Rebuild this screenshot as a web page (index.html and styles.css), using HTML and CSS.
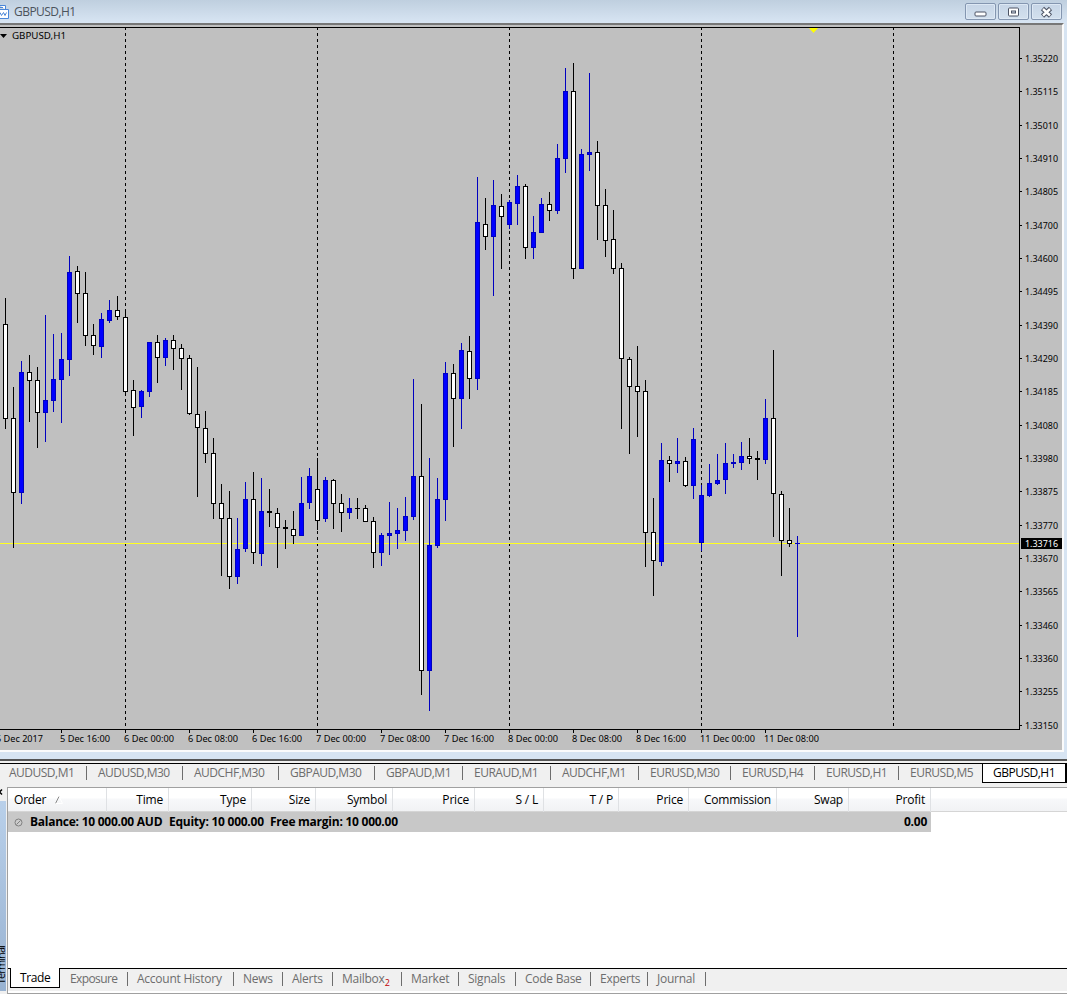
FILE: index.html
```
<!DOCTYPE html>
<html>
<head>
  <meta charset="utf-8">
  <title>GBPUSD,H1</title>
  <link rel="stylesheet" href="styles.css">
</head>
<body>

  <div class="window">
    <div class="titlebar">
      <svg class="app-icon" width="9" height="16" viewBox="0 0 9 16">
        <path d="M0 1.500h5.500v4M0 5.500h8.500v9H0" fill="#fff" stroke="#4a86d8"/>
        <path d="M0 3.500h3M0 8.500l1.500 3l2-3l1.500 3l1.500-3" fill="none" stroke="#4a86d8"/>
      </svg>
      <span class="title">GBPUSD,H1</span>
      <div class="win-buttons">
        <button><svg width="13" height="12"><rect x="1" y="6" width="11" height="4" rx="1" fill="#fff" stroke="#4c5364"/></svg></button>
        <button><svg width="13" height="12"><rect x="1.500" y="2" width="10" height="8" rx="1" fill="#fff" stroke="#4c5364"/><rect x="4.500" y="5" width="4" height="2" fill="#d0dcea" stroke="#4c5364"/></svg></button>
        <button><svg width="13" height="12"><path d="M2.500 2.500l8 7.500M10.500 2.500l-8 7.500" stroke="#4c5364" stroke-width="4.600"/><path d="M3 3l7 6.500M10 3l-7 6.500" stroke="#fff" stroke-width="2.400"/></svg></button>
      </div>
    </div>
    <div class="chart-frame">
      <svg id="chart" width="1062" height="725" viewBox="0 25 1062 725"></svg>
    </div>
  </div>

  <div class="chart-tabs">
    <div><span>AUDUSD,M1</span></div>
    <div><span>AUDUSD,M30</span></div>
    <div><span>AUDCHF,M30</span></div>
    <div><span>GBPAUD,M30</span></div>
    <div><span>GBPAUD,M1</span></div>
    <div><span>EURAUD,M1</span></div>
    <div><span>AUDCHF,M1</span></div>
    <div><span>EURUSD,M30</span></div>
    <div><span>EURUSD,H4</span></div>
    <div><span>EURUSD,H1</span></div>
    <div><span>EURUSD,M5</span></div>
    <div class="active"><span>GBPUSD,H1</span></div>
  </div>

  <div class="terminal">
    <div class="side">
      <svg class="side-close" width="7" height="14"><path d="M-3 2.500l5 5M2 2.500l-5 5" stroke="#000" stroke-width="1.500"/></svg>
      <div class="side-bar"><span>Terminal</span></div>
    </div>
    <div class="panel">
      <div class="thead">
        <div class="order">Order <svg width="8" height="8"><path d="M0.500 7.500L4 0.500" stroke="#888"/><path d="M4 0.500L7.500 7.500H0.500" stroke="#fff" fill="none"/></svg></div>
        <div>Time</div>
        <div>Type</div>
        <div>Size</div>
        <div>Symbol</div>
        <div>Price</div>
        <div>S / L</div>
        <div>T / P</div>
        <div>Price</div>
        <div>Commission</div>
        <div>Swap</div>
        <div>Profit</div>
      </div>
      <div class="rows">
        <div class="balance">
          <svg width="9" height="9"><circle cx="4.500" cy="4.500" r="3.500" fill="#ccc" stroke="#808080"/><path d="M2.500 6.500l4-4" stroke="#808080"/></svg>
          <span class="b1">Balance: 10 000.00 AUD</span>
          <span class="b2">Equity: 10 000.00</span>
          <span class="b3">Free margin: 10 000.00</span>
          <span class="profit">0.00</span>
        </div>
      </div>
      <div class="bottom-tabs">
        <div class="active">Trade</div>
        <div>Exposure</div>
        <div>Account History</div>
        <div>News</div>
        <div>Alerts</div>
        <div>Mailbox<sub>2</sub></div>
        <div>Market</div>
        <div>Signals</div>
        <div>Code Base</div>
        <div>Experts</div>
        <div>Journal</div>
      </div>
    </div>
  </div>

  <script src="chart.js"></script>
</body>
</html>
```
FILE: styles.css
```
* {
  box-sizing: border-box;
}

body {
  margin: 0;
  width: 1067px;
  height: 994px;
  overflow: hidden;
  background: #f0f0f0;
  font-family: "Open Sans", "Noto Sans", sans-serif;
  font-size: 12px;
  color: #000;
}

.window {
  height: 759px;
  background: #d7e4f2;
}

.titlebar {
  display: flex;
  align-items: center;
  height: 23px;
  background: linear-gradient(#bfcfdf, #d8e5f3);
}

.app-icon {
  width: 9px;
  margin-right: 5px;
}

.title {
  flex: 1;
  color: #4c535c;
  letter-spacing: -0.55px;
}

.win-buttons {
  display: flex;
  gap: 2px;
  margin-right: 5px;
}

.win-buttons button {
  display: flex;
  align-items: center;
  justify-content: center;
  width: 31px;
  height: 17px;
  padding: 0;
  border: 1px solid #8496b0;
  border-radius: 2px;
  background: linear-gradient(#c6d5e6, #d3e0ee);
  box-shadow: inset 0 0 0 1px #dde8f4;
}

.chart-frame {
  width: 1064px;
  height: 729px;
  border-top: 2px solid #777;
  border-right: 2px solid #fbfbfb;
  border-bottom: 2px solid #fbfbfb;
  background: #c0c0c0;
}

#chart {
  display: block;
  font-family: "Noto Sans", "Open Sans", sans-serif;
  font-size: 9.5px;
}

.chart-tabs {
  display: grid;
  grid-template-columns: 87px 96px 96px 96px 88px 88px 88px 92px 84px 84px 83px 85px;
  height: 28px;
  border-top: 2px solid #555;
  border-bottom: 4px solid #f0f0f0;
  background: linear-gradient(#f0f0f0 2px, #000 2px, #000 3px, #f0f0f0 3px, #f0f0f0 22px, #fff 22px);
  letter-spacing: -0.5px;
  color: #6d6d6d;
}

.chart-tabs div {
  height: 14px;
  margin-top: 5px;
  padding-left: 11px;
  border-right: 1px solid #6d6d6d;
  line-height: 14px;
  white-space: nowrap;
}

.chart-tabs div:first-child {
  padding-left: 9px;
}

.chart-tabs div:nth-child(11) {
  border-right: none;
}

.chart-tabs .active {
  height: 20px;
  margin-top: 2px;
  padding-left: 10px;
  border: 1px solid #000;
  border-width: 1px 2px 1px 1px;
  background: #fff;
  color: #000;
  line-height: 18px;
}

.terminal {
  display: flex;
  height: 207px;
}

.side {
  width: 7px;
  height: 204px;
}

.side-close {
  display: block;
}

.side-bar {
  display: flex;
  align-items: flex-end;
  width: 6px;
  height: 190px;
  padding-bottom: 7px;
  overflow: hidden;
  background: linear-gradient(#b9d0ea, #98b2d1);
}

.side-bar span {
  writing-mode: vertical-rl;
  transform: rotate(180deg);
  flex: none;
  margin-left: -7px;
  font-size: 11px;
  line-height: 16px;
  letter-spacing: -0.9px;
}

.panel {
  display: flex;
  flex-direction: column;
  flex: 1;
  border-left: 1px solid #a0a0a0;
  border-top: 1px solid #a0a0a0;
  border-bottom: 1px solid #a0a0a0;
}

.thead {
  display: grid;
  grid-template-columns: 99px 62px 83px 64px 77px 82px 69px 75px 70px 88px 72px 82px;
  height: 24px;
  border-bottom: 1px solid #d5d5d5;
  background: linear-gradient(#fff 10px, #f7f8fa 11px, #f1f2f4);
  letter-spacing: -0.2px;
}

.thead div {
  padding-right: 5px;
  border-right: 1px solid #dfe1e4;
  line-height: 24px;
  text-align: right;
  white-space: nowrap;
}

.thead .order {
  padding-left: 6px;
  text-align: left;
}

.order svg {
  margin-left: 6px;
}

.rows {
  flex: 1;
  background: #fff;
}

.balance {
  display: flex;
  align-items: center;
  width: 923px;
  height: 20px;
  padding: 0 4px 0 6px;
  background: #c8c8c8;
  font-weight: bold;
  line-height: 20px;
  letter-spacing: -0.25px;
  white-space: nowrap;
}

.balance svg {
  margin-right: 7px;
}

.balance span {
  height: 20px;
}

.b1 {
  width: 139px;
}

.b2 {
  width: 101px;
}

.profit {
  margin-left: auto;
}

.bottom-tabs {
  display: grid;
  grid-template-columns: 52px 68px 106px 49px 50px 69px 57px 57px 75px 57px 58px;
  height: 25px;
  border-top: 1px solid #000;
  border-bottom: 2px solid #fff;
  color: #6d6d6d;
  letter-spacing: -0.25px;
}

.bottom-tabs div {
  height: 14px;
  margin-top: 3px;
  padding-left: 9px;
  border-right: 1px solid #6d6d6d;
  line-height: 13px;
  white-space: nowrap;
}

.bottom-tabs div:nth-child(2) {
  padding-left: 10px;
  letter-spacing: -0.6px;
}

.bottom-tabs .active {
  height: 20px;
  margin: -1px 0 0 2px;
  border: 1px solid #000;
  border-width: 0 1px 1px 1px;
  background: #fff;
  color: #000;
  line-height: 20px;
  letter-spacing: -0.4px;
}

.bottom-tabs sub {
  color: #c00000;
  font-size: 9px;
  line-height: 0;
}
```
FILE: chart.js
```
// high, low, body top, body bottom, 1 = up candle
const candles = [
  [298,429,324,419,0],[387,548,418,493,0],[361,504,372,493,1],[355,422,372,381,0],[367,448,380,413,0],
  [315,442,400,413,1],[334,412,379,401,1],[333,423,359,380,1],[256,376,272,360,1],[266,323,271,294,0],
  [272,346,293,336,0],[324,355,335,346,0],[313,358,319,347,1],[300,323,310,321,1],[296,320,310,317,0],
  [309,394,317,392,0],[380,436,390,408,0],[390,418,391,407,1],[342,397,342,392,1],[335,383,342,358,0],
  [338,366,340,358,1],[335,370,340,349,0],[344,390,348,359,0],[355,415,358,414,0],[367,497,414,428,0],
  [411,463,428,454,0],[438,519,453,504,0],[484,576,503,519,0],[491,589,518,577,0],[518,584,549,577,1],
  [482,552,499,549,1],[472,564,499,553,0],[478,566,511,554,1],[489,527,511,513,0],[508,568,513,528,0],
  [520,549,527,529,0],[511,544,529,536,0],[477,536,503,536,1],[468,509,476,503,1],[458,530,489,521,0],
  [477,522,480,519,1],[479,529,480,504,0],[494,532,503,513,0],[498,519,508,513,1],[498,519,508,509,0],
  [505,522,508,522,0],[517,568,521,553,0],[533,566,535,553,1],[502,555,533,536,1],[508,549,530,534,1],
  [497,541,516,531,1],[379,520,476,517,1],[404,695,476,671,0],[458,711,545,671,1],[478,548,499,546,1],
  [362,521,373,500,1],[364,447,373,399,0],[343,429,350,399,1],[336,399,351,379,0],[177,390,222,379,1],
  [198,250,224,237,0],[180,296,205,237,1],[194,269,206,217,0],[200,229,202,225,1],[175,225,186,204,1],
  [184,259,186,248,0],[216,259,232,248,1],[198,233,204,233,1],[192,221,204,211,0],[144,214,158,211,1],
  [68,173,91,159,1],[63,279,91,269,0],[149,269,154,269,1],[73,171,152,155,1],[141,240,152,206,0],
  [189,257,205,241,0],[210,274,239,269,0],[263,429,268,359,0],[357,454,359,387,0],[346,437,386,392,0],
  [380,567,391,533,0],[498,596,532,561,0],[443,566,460,562,1],[456,482,460,464,0],[438,473,461,464,1],
  [457,487,461,486,0],[428,499,439,486,1],[485,551,495,543,1],[464,497,483,496,1],[454,485,480,484,1],
  [443,494,463,480,1],[454,468,462,464,1],[442,470,456,463,1],[438,464,456,459,0],[451,480,458,460,0],
  [399,464,418,460,1],[350,537,418,494,0],[491,576,494,541,0],[508,547,540,544,0],[536,637,543,544,1]
];

const prices = ['1.35220', '1.35115', '1.35010', '1.34910', '1.34805', '1.34700', '1.34600',
  '1.34495', '1.34390', '1.34290', '1.34185', '1.34080', '1.33980', '1.33875', '1.33770',
  '1.33670', '1.33565', '1.33460', '1.33360', '1.33255', '1.33150'];

const times = ['5 Dec 16:00', '6 Dec 00:00', '6 Dec 08:00', '6 Dec 16:00', '7 Dec 00:00', '7 Dec 08:00',
  '7 Dec 16:00', '8 Dec 00:00', '8 Dec 08:00', '8 Dec 16:00', '11 Dec 00:00', '11 Dec 08:00'];

let out = '';

function rect(x, y, w, h, fill) {
  out += `<rect x="${x}" y="${y}" width="${w}" height="${h}" fill="${fill}"/>`;
}

function text(x, y, str, width, fill = '#000') {
  out += `<text x="${x}" y="${y}" textLength="${width}" lengthAdjust="spacingAndGlyphs" fill="${fill}">${str}</text>`;
}

// day separators
for (let x = 125; x < 1000; x += 192) {
  out += `<path d="M${x + 0.5} 27V729" stroke="#000" stroke-dasharray="3 3"/>`;
}

// current price
rect(0, 543, 1019, 1, '#ffff20');

candles.forEach(([high, low, top, bottom, up], i) => {
  const x = 5 + i * 8;
  const line = up ? '#0000c0' : '#000';
  rect(x, high, 1, low - high, line);
  rect(x - 2, top, 5, bottom - top, line);
  if (bottom - top > 2) {
    rect(x - 1, top + 1, 3, bottom - top - 2, up ? '#0000ff' : '#fff');
  }
});

// frame and axes
rect(0, 27, 1020, 1, '#000');
rect(1019, 27, 1, 703, '#000');
rect(0, 729, 1020, 1, '#000');

prices.forEach((p, i) => {
  const y = Math.round(58 + i * 33.34);
  rect(1020, y, 2, 1, '#000');
  text(1025, y + 4, p, 33);
});

text(-4, 742, '5 Dec 2017', 47);
times.forEach((t, i) => {
  const x = 61 + i * 64;
  rect(x, 730, 1, 3, '#000');
  text(x - 1, 742, t, t.length > 11 ? 55 : 50);
});

rect(1021, 538, 41, 11, '#000');
text(1025, 547, '1.33716', 33, '#fff');

out += '<path d="M0 34H7L3.500 38Z" fill="#000"/>';
out += '<path d="M809 28H818L813.500 33Z" fill="#ffff00"/>';
text(12, 39, 'GBPUSD,H1', 54);

document.getElementById('chart').innerHTML = out;
```
